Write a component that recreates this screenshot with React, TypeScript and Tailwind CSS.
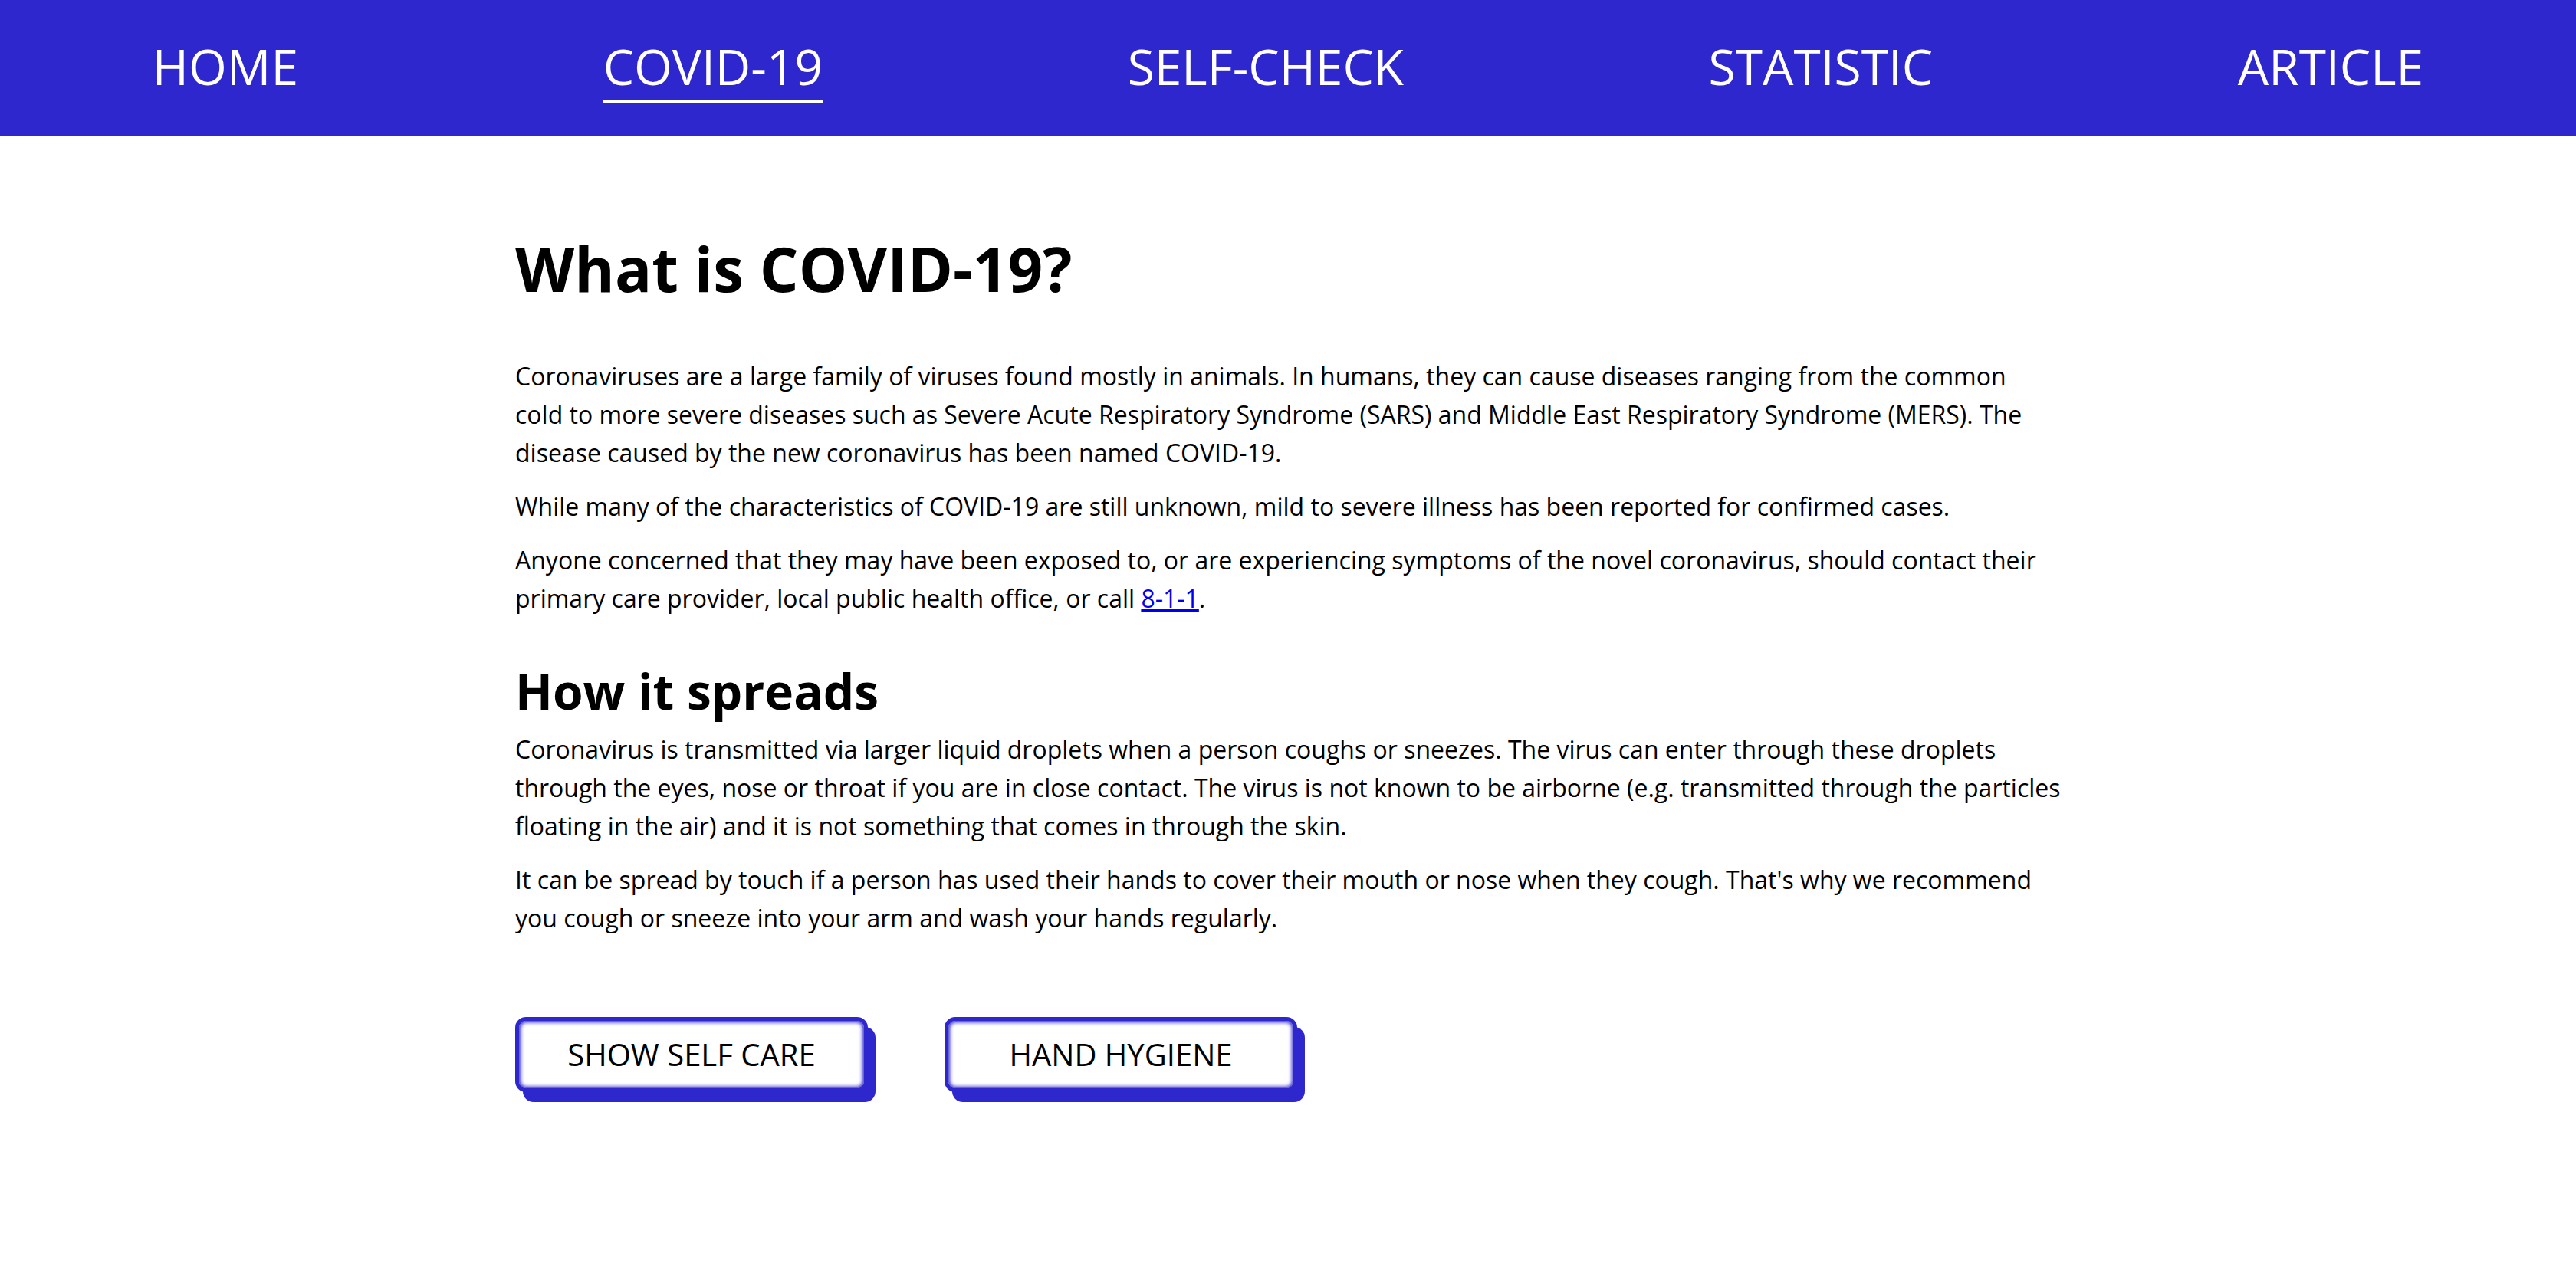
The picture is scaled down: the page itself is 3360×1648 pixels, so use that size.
import React from "react";

const navItems = ["HOME", "COVID-19", "SELF-CHECK", "STATISTIC", "ARTICLE"];

export default function App() {
  return (
    <div className="min-h-screen bg-white text-black" style={{ fontFamily: '"Open Sans", "Noto Sans", sans-serif' }}>
      <nav className="h-[178px] bg-[#2e27cd] flex items-center justify-around">
        {navItems.map((item) => (
          <span
            key={item}
            className={
              "inline-block text-white text-[64px] leading-none pt-[11px] pb-[11px] border-b-4 " +
              (item === "COVID-19" ? "border-white" : "border-transparent")
            }
          >
            {item}
          </span>
        ))}
      </nav>
      <main className="w-[60%] mx-auto pt-[112px] pb-[200px]">
        <h1 className="text-[80px] font-bold leading-normal">What is COVID-19?</h1>
        <p className="text-[32px] leading-[50px] mt-[56px] pr-[12px]">
          Coronaviruses are a large family of viruses found mostly in animals. In humans, they can cause diseases ranging from the common cold to more severe diseases such as Severe Acute Respiratory Syndrome (SARS) and Middle East Respiratory Syndrome (MERS). The disease caused by the new coronavirus has been named COVID-19.
        </p>
        <p className="text-[32px] leading-[50px] mt-[20px]">
          While many of the characteristics of COVID-19 are still unknown, mild to severe illness has been reported for confirmed cases.
        </p>
        <p className="text-[32px] leading-[50px] mt-[20px]">
          Anyone concerned that they may have been exposed to, or are experiencing symptoms of the novel coronavirus, should contact their primary care provider, local public health office, or call{" "}
          <a href="#" className="text-[#0000ee] underline">8-1-1</a>.
        </p>
        <h2 className="text-[64px] font-bold leading-normal mt-[48px]">How it spreads</h2>
        <p className="text-[32px] leading-[50px] mt-[3px]">
          Coronavirus is transmitted via larger liquid droplets when a person coughs or sneezes. The virus can enter through these droplets through the eyes, nose or throat if you are in close contact. The virus is not known to be airborne (e.g. transmitted through the particles floating in the air) and it is not something that comes in through the skin.
        </p>
        <p className="text-[32px] leading-[50px] mt-[20px]">
          It can be spread by touch if a person has used their hands to cover their mouth or nose when they cough. That's why we recommend you cough or sneeze into your arm and wash your hands regularly.
        </p>
        <div className="flex gap-[100px] mt-[104px]">
          {["SHOW SELF CARE", "HAND HYGIENE"].map((b) => (
            <button
              key={b}
              className="w-[460px] h-[98px] rounded-[14px] bg-white border-[5px] border-[#2e27cd] text-[40px] text-black leading-none shadow-[10px_13px_0_0_#2e27cd,inset_0_0_5px_2px_#2e27cd]"
            >
              {b}
            </button>
          ))}
        </div>
      </main>
    </div>
  );
}
